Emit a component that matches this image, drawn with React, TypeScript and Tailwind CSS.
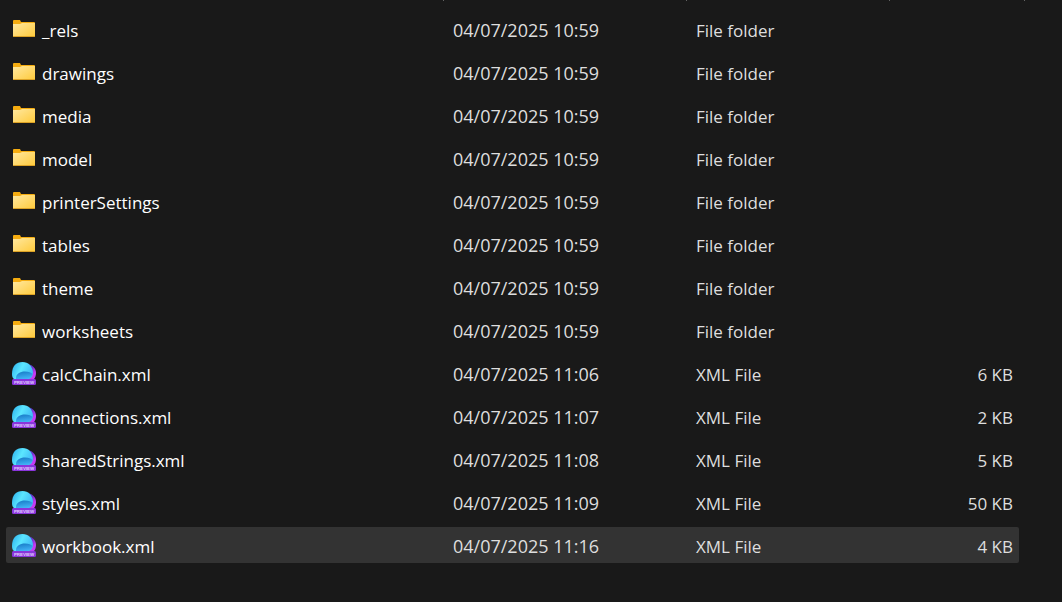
import React, { useId } from "react";

type Entry = { name: string; date: string; kind: "folder" | "xml"; size?: string };

const entries: Entry[] = [
  { name: "_rels", date: "04/07/2025 10:59", kind: "folder" },
  { name: "drawings", date: "04/07/2025 10:59", kind: "folder" },
  { name: "media", date: "04/07/2025 10:59", kind: "folder" },
  { name: "model", date: "04/07/2025 10:59", kind: "folder" },
  { name: "printerSettings", date: "04/07/2025 10:59", kind: "folder" },
  { name: "tables", date: "04/07/2025 10:59", kind: "folder" },
  { name: "theme", date: "04/07/2025 10:59", kind: "folder" },
  { name: "worksheets", date: "04/07/2025 10:59", kind: "folder" },
  { name: "calcChain.xml", date: "04/07/2025 11:06", kind: "xml", size: "6 KB" },
  { name: "connections.xml", date: "04/07/2025 11:07", kind: "xml", size: "2 KB" },
  { name: "sharedStrings.xml", date: "04/07/2025 11:08", kind: "xml", size: "5 KB" },
  { name: "styles.xml", date: "04/07/2025 11:09", kind: "xml", size: "50 KB" },
  { name: "workbook.xml", date: "04/07/2025 11:16", kind: "xml", size: "4 KB" },
];

const selected = "workbook.xml";

function FolderIcon() {
  const id = useId();
  return (
    <svg className="size-6 shrink-0" viewBox="0 0 24 24" aria-hidden="true">
      <defs>
        <linearGradient id={id} x1="0" y1="0" x2="1" y2="1">
          <stop offset="0" stopColor="#ffe8a0" />
          <stop offset="1" stopColor="#ffca3a" />
        </linearGradient>
      </defs>
      <path d="M1 4q0-1 1-1h6l1 2h13q1 0 1 1v5H1z" fill="#f5ac10" />
      <path d="M1 7h7l2-1h13v13q0 1-1 1H2q-1 0-1-1z" fill={`url(#${id})`} />
      <path d="M1 19h22q0 1-1 1H2q-1 0-1-1z" fill="#dca226" />
    </svg>
  );
}

function PreviewIcon() {
  const id = useId();
  return (
    <svg className="size-6 shrink-0" viewBox="0 0 24 24" aria-hidden="true">
      <defs>
        <linearGradient id={`${id}a`} x1="0" y1="0.2" x2="1" y2="0.6">
          <stop offset="0" stopColor="#2fb4ee" />
          <stop offset="0.45" stopColor="#5be6ff" />
          <stop offset="1" stopColor="#3fb8f6" />
        </linearGradient>
        <linearGradient id={`${id}b`} x1="0.4" y1="0" x2="1" y2="0.5">
          <stop offset="0" stopColor="#3a46b8" />
          <stop offset="0.5" stopColor="#6a35d0" />
          <stop offset="1" stopColor="#c43cf5" />
        </linearGradient>
        <linearGradient id={`${id}c`} x1="0" y1="0" x2="0.3" y2="1">
          <stop offset="0" stopColor="#1678c4" />
          <stop offset="1" stopColor="#3fb0f4" />
        </linearGradient>
      </defs>
      <path d="M14 3c6 0 10 4 10 9 0 3-1 5-2 6H10z" fill={`url(#${id}b)`} />
      <path d="M0 13C0 5 4 1 10.500 1c6 0 9.500 4 10.500 10 0 3-1 6-4 7H2Q0 17 0 13z" fill={`url(#${id}a)`} />
      <path d="M4 17c0-4 4-6.500 9-6.500 4 0 6 1 7.500 2.500-1 3-2.500 4-5.500 5H4z" fill={`url(#${id}c)`} />
      <rect y="18" width="24" height="6" rx="1.500" fill="#8a35dc" />
      <text x="12" y="22.600" textAnchor="middle" fontSize="4.400" fontWeight="700" fill="#e2ccff" fontFamily="Liberation Sans, sans-serif">
        PREVIEW
      </text>
    </svg>
  );
}

export default function App() {
  return (
    <main className="min-h-screen bg-[#191919] font-['Open_Sans','Noto_Sans',sans-serif] text-[17px] leading-6 text-[#dedede]">
      <div className="flex h-1 items-start pr-[37px]" aria-hidden="true">
        <div className="h-px flex-1" />
        <div className="h-px w-[243px] border-l border-[#636363]" />
        <div className="h-px w-[203px] border-l border-[#636363]" />
        <div className="h-px w-[136px] border-x border-[#636363]" />
      </div>
      <div className="pr-[43px] pl-[6px]">
        <table className="w-full table-fixed border-separate border-spacing-x-0 border-spacing-y-[7px]" aria-label="Files">
          <colgroup>
            <col />
            <col className="w-[243px]" />
            <col className="w-[203px]" />
            <col className="w-[130px]" />
          </colgroup>
          <tbody>
            {entries.map((entry) => (
              <tr
                key={entry.name}
                aria-selected={entry.name === selected}
                className="h-9 hover:bg-[#2b2b2b] aria-selected:bg-[#333333]"
              >
                <td className="rounded-l-xs p-0 pl-[6px] text-white">
                  <div className="flex items-center gap-[6px]">
                    {entry.kind === "folder" ? <FolderIcon /> : <PreviewIcon />}
                    <span className="pt-1">{entry.name}</span>
                  </div>
                </td>
                <td className="p-0 pt-[2px] pl-[10px] text-lg leading-6">{entry.date}</td>
                <td className="p-0 pt-1 pl-[10px]">{entry.kind === "folder" ? "File folder" : "XML File"}</td>
                <td className="rounded-r-xs p-0 pt-1 pr-[6px] text-right">{entry.size}</td>
              </tr>
            ))}
          </tbody>
        </table>
      </div>
    </main>
  );
}
